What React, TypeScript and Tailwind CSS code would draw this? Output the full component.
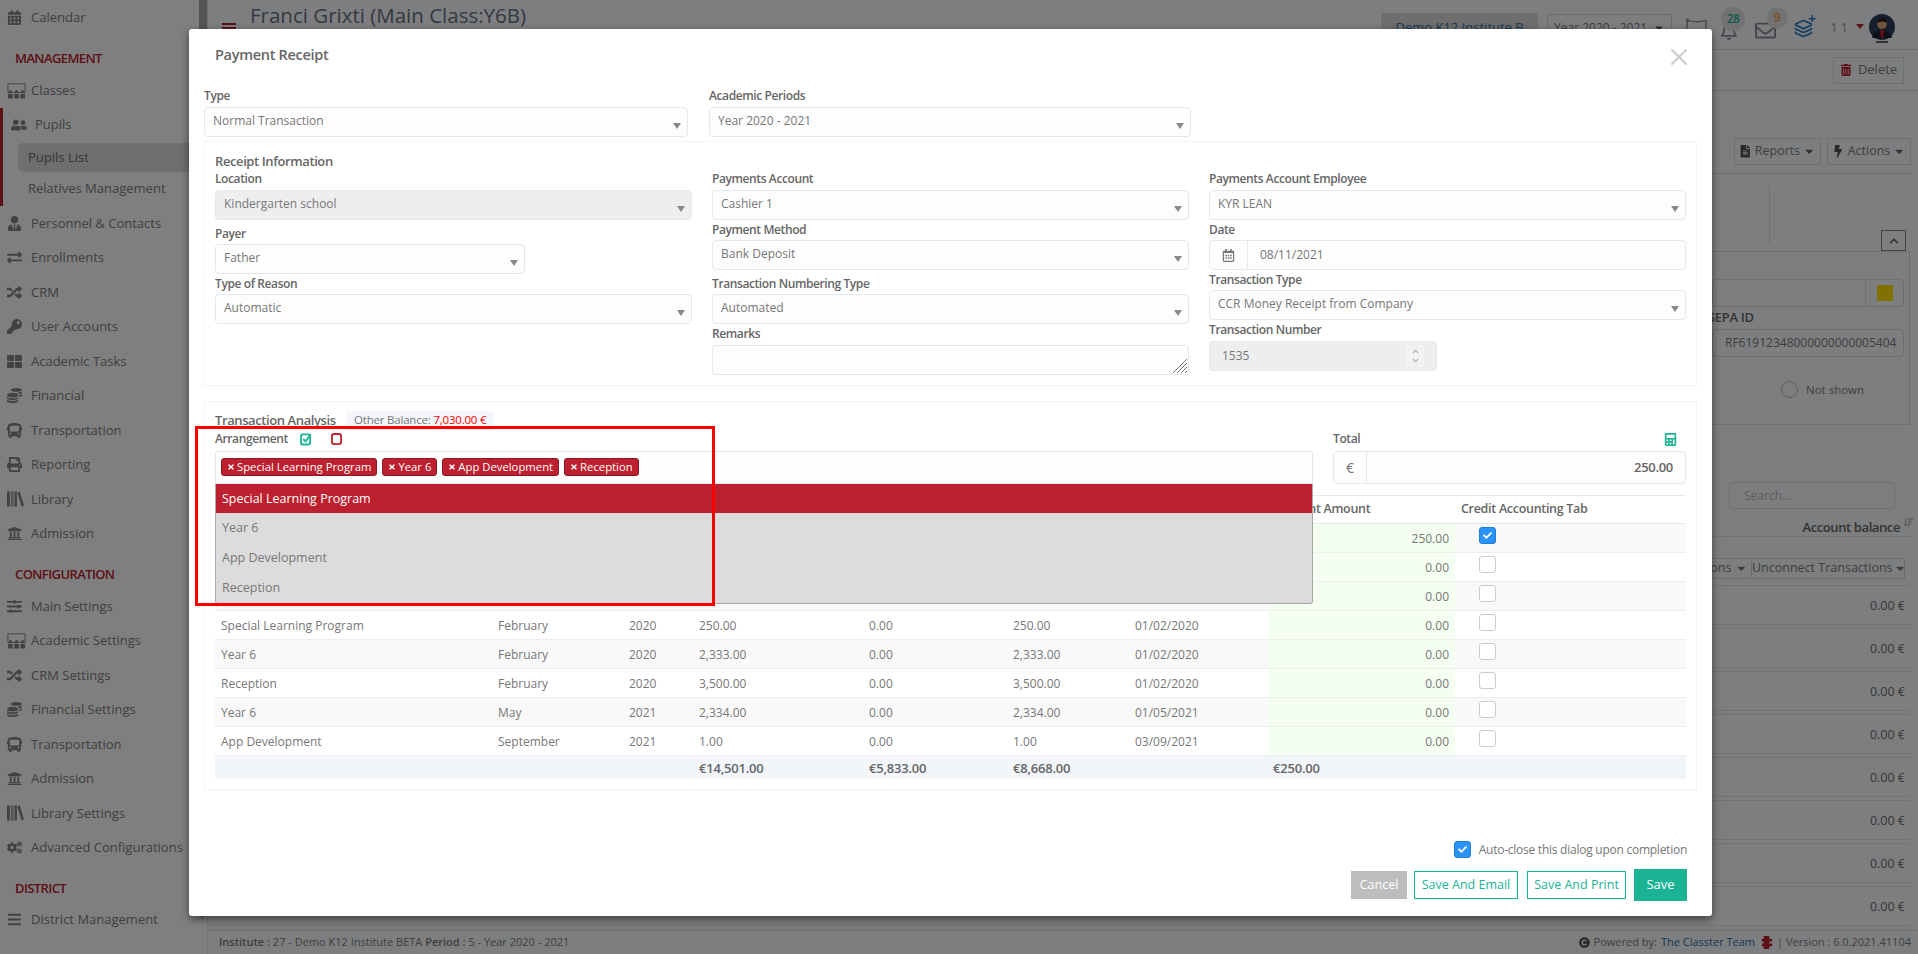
import React from "react";
import {
  FaCalendarAlt, FaUserFriends, FaUserTie, FaExchangeAlt, FaRandom, FaKey, FaThLarge, FaCoins, FaBus, FaPrint,
  FaUniversity, FaSlidersH, FaCogs, FaBars, FaRegBell, FaRegEnvelope, FaTrashAlt, FaBolt, FaFileAlt, FaChevronUp,
  FaCheck, FaRegCalendarAlt, FaCalculator, FaTimes, FaCopyright, FaChevronDown, FaSortAmountDown, FaCaretDown,
} from "react-icons/fa";
import { Layers, X } from "lucide-react";

const ClassesIcon = () => (
  <svg viewBox="0 0 20 16" className="w-[19px] h-[16px]" fill="currentColor">
    <rect x="1" y="0.5" width="18" height="9" fill="none" stroke="currentColor" strokeWidth="1" />
    <circle cx="3.5" cy="8.5" r="1.6" /><circle cx="10" cy="8.5" r="1.6" /><circle cx="16.5" cy="8.5" r="1.6" />
    <rect x="1" y="11" width="5" height="5" rx="1" /><rect x="7.5" y="11" width="5" height="5" rx="1" /><rect x="14" y="11" width="5" height="5" rx="1" />
  </svg>
);
const LibraryIcon = () => (
  <svg viewBox="0 0 18 16" className="w-[17px] h-[16px]" fill="currentColor">
    <rect x="0" y="0" width="3" height="16" /><rect x="4" y="0" width="3" height="16" opacity="0.7" /><rect x="8" y="0" width="2.5" height="16" />
    <polygon points="11,1 13.5,0 18,15 15.5,16" />
  </svg>
);
const Caret = () => (
  <svg viewBox="0 0 8 6" className="w-[8px] h-[6px] absolute right-[6px] top-[15px]"><polygon points="0,0 8,0 4,6" fill="#888888" /></svg>
);

function SideItem({ icon, label }: { icon: React.ReactNode; label: string }) {
  return (
    <div className="flex items-center h-[34.5px] pl-[7px] text-[13px] text-[#808080]">
      <span className="w-[24px] flex items-center justify-start text-[15px] text-[#858585]">{icon}</span>
      <span className="whitespace-nowrap">{label}</span>
    </div>
  );
}
const Heading = ({ children, cls }: { children: React.ReactNode; cls: string }) => (
  <div className={"h-[18px] leading-[18px] pl-[15px] text-[13px] font-semibold tracking-[-0.6px] text-[#bd202e] " + cls}>{children}</div>
);

function Sidebar() {
  return (
    <aside className="relative w-[208px] shrink-0 h-full bg-white border-r border-[#e6e6e6]">
      <div className="absolute right-0 top-0 w-[8px] h-[32px] bg-[#aaaaaa] rounded-b-[4px]" />
      <SideItem icon={<FaCalendarAlt />} label="Calendar" />
      <Heading cls="mt-[14px]">MANAGEMENT</Heading>
      <div className="mt-[7px]" />
      <SideItem icon={<ClassesIcon />} label="Classes" />
      <div className="border-l-[3px] border-[#bd202e] h-[98px]">
        <div className="flex items-center h-[34px] pl-[8px] text-[13px] text-[#808080]">
          <span className="w-[24px] text-[16px] text-[#858585]"><FaUserFriends /></span>Pupils
        </div>
        <div className="mt-[1px] ml-[15px] h-[29px] flex items-center pl-[10px] rounded-l-[5px] bg-[#dedede] text-[13px] text-[#6a6a6a]">Pupils List</div>
        <div className="mt-[3px] ml-[15px] h-[28px] flex items-center pl-[10px] text-[13px] text-[#808080]">Relatives Management</div>
      </div>
      <SideItem icon={<FaUserTie />} label="Personnel & Contacts" />
      <SideItem icon={<FaExchangeAlt />} label="Enrollments" />
      <SideItem icon={<FaRandom />} label="CRM" />
      <SideItem icon={<FaKey />} label="User Accounts" />
      <SideItem icon={<FaThLarge />} label="Academic Tasks" />
      <SideItem icon={<FaCoins />} label="Financial" />
      <SideItem icon={<FaBus />} label="Transportation" />
      <SideItem icon={<FaPrint />} label="Reporting" />
      <SideItem icon={<LibraryIcon />} label="Library" />
      <SideItem icon={<FaUniversity />} label="Admission" />
      <Heading cls="mt-[14px]">CONFIGURATION</Heading>
      <div className="mt-[6px]" />
      <SideItem icon={<FaSlidersH />} label="Main Settings" />
      <SideItem icon={<ClassesIcon />} label="Academic Settings" />
      <SideItem icon={<FaRandom />} label="CRM Settings" />
      <SideItem icon={<FaCoins />} label="Financial Settings" />
      <SideItem icon={<FaBus />} label="Transportation" />
      <SideItem icon={<FaUniversity />} label="Admission" />
      <SideItem icon={<LibraryIcon />} label="Library Settings" />
      <SideItem icon={<FaCogs />} label="Advanced Configurations" />
      <Heading cls="mt-[14px]">DISTRICT</Heading>
      <div className="mt-[5px]" />
      <SideItem icon={<FaBars />} label="District Management" />
      <span className="absolute right-[3px] bottom-[30px] text-[11px] text-[#888888]">‹</span>
    </aside>
  );
}

const Avatar = () => (
  <svg viewBox="0 0 28 30" className="w-[28px] h-[30px] ml-[4px]">
    <circle cx="14" cy="13" r="13" fill="#2c3a5a" />
    <path d="M4 24 Q5 17 14 16 Q23 17 24 24 Z" fill="#1c2333" />
    <polygon points="12,16 16,16 15,24 13,24" fill="#d01f2a" />
    <circle cx="14" cy="10" r="5" fill="#e0a97f" />
    <path d="M9 9 Q10 4 14 4 Q18 4 19 9 Q14 6 9 9 Z" fill="#2a1a12" />
    <rect x="8" y="27" width="12" height="2" fill="#666666" />
  </svg>
);

function Main() {
  return (
    <main className="flex-1 min-w-0 h-full flex flex-col bg-[#fafcff] text-[13px] text-[#7d7d7d]">
      {/* header */}
      <div className="h-[50px] shrink-0 border-b border-[#d8d8d8] flex items-start pr-[22px]">
        <div className="mt-[23px] ml-[14px] w-[14px] flex flex-col gap-[2px]">
          <span className="h-[2px] bg-[#bd202e]" /><span className="h-[2px] bg-[#bd202e]" /><span className="h-[2px] bg-[#bd202e]" />
        </div>
        <div className="ml-[14px] text-[20.5px] leading-[31px] text-[#6b7380] whitespace-nowrap">Franci Grixti (Main Class:Y6B)</div>
        <div className="ml-auto flex items-start">
          <div className="mt-[13px] w-[157px] h-[29px] bg-[#dcdcdc] flex items-center justify-center text-[13px] text-[#2f6ea5]">Demo K12 Institute B</div>
          <div className="mt-[14px] ml-[9px] w-[125px] h-[28px] border border-[#d8d8d8] flex items-center justify-center gap-[6px] text-[12px] whitespace-nowrap">Year 2020 - 2021<FaCaretDown className="text-[#555555]" /></div>
          <svg viewBox="0 0 22 20" className="mt-[18px] ml-[14px] w-[21px] h-[20px]" fill="none" stroke="#8a8f96" strokeWidth="1.4"><path d="M1 2 L1 18 L21 18 L21 2 Q11 5 1 2 Z" /><circle cx="1.5" cy="2" r="1.2" /></svg>
          <div className="relative mt-[20px] ml-[13px] w-[25px] h-[22px]">
            <FaRegBell className="absolute left-0 top-[2px] text-[18px] text-[#8a8f96]" />
            <span className="absolute left-[1px] -top-[13px] w-[24px] h-[24px] rounded-full bg-[#e4e4e4] flex items-center justify-center text-[12px] font-semibold tracking-[-0.5px] text-[#1ab394]">28</span>
          </div>
          <div className="relative mt-[20px] ml-[10px] w-[26px] h-[22px]">
            <FaRegEnvelope className="absolute left-0 top-0 text-[21px] text-[#8a8f96]" />
            <span className="absolute left-[12px] -top-[13px] w-[20px] h-[22px] rounded-full bg-[#e4e4e4] flex items-center justify-center text-[12px] font-semibold text-[#f0a14a]">9</span>
          </div>
          <div className="relative mt-[18px] ml-[13px] w-[20px] h-[20px] text-[#2b7fc4]">
            <Layers className="w-[19px] h-[19px] mt-[1px]" strokeWidth={2.2} />
            <span className="absolute right-[-2px] -top-[6px] text-[14px] font-bold leading-[14px]">+</span>
          </div>
          <span className="mt-[18px] ml-[16px] text-[13px] tracking-[3px] text-[#9a9a9a]">11</span>
          <span className="mt-[24px] ml-[5px] w-0 h-0 border-x-[4px] border-t-[5px] border-x-transparent border-t-[#bd202e]" />
          <div className="mt-[14px]"><Avatar /></div>
        </div>
      </div>
      {/* delete bar */}
      <div className="h-[41px] shrink-0 border-b border-[#d8d8d8] flex items-center justify-end pr-[14px]">
        <div className="w-[71px] h-[27px] border border-[#e3e3e3] flex items-center justify-center gap-[6px] text-[13px]"><FaTrashAlt className="text-[#bd202e] text-[12px]" />Delete</div>
      </div>
      {/* actions */}
      <div className="mt-[47px] h-[27px] shrink-0 flex justify-end gap-[6px] pr-[7px]">
        <div className="w-[87px] border border-[#dddddd] flex items-center justify-center gap-[3px] text-[12.5px]"><FaFileAlt className="text-[#555555]" />Reports<FaCaretDown className="text-[#666666]" /></div>
        <div className="w-[84px] border border-[#dddddd] flex items-center justify-center gap-[3px] text-[12.5px]"><FaBolt className="text-[#555555]" />Actions<FaCaretDown className="text-[#666666]" /></div>
      </div>
      <div className="mt-[8px] mr-[7px] shrink-0 border-b border-[#d8d8d8]" />
      <div className="h-[77px] shrink-0 flex justify-end pr-[12px]">
        <div className="mt-[12px] h-[57px] w-px bg-[#dddddd]" />
        <div className="mt-[56px] ml-[111px] w-[25px] h-[21px] border border-[#888888] flex items-center justify-center text-[#666666] text-[10px]"><FaChevronUp /></div>
      </div>
      {/* panel */}
      <div className="h-[174px] shrink-0 mr-[8px] border border-[#dddddd] flex flex-col items-end pr-[5px]">
        <div className="mt-[27px] w-[192px] h-[28px] border border-[#dddddd] rounded-[4px] flex justify-end">
          <div className="w-[38px] h-full border-l border-[#dddddd] flex items-center justify-center"><span className="w-[16px] h-[16px] bg-[#ffe400]" /></div>
        </div>
        <div className="mt-[1px] w-[192px] h-[18px] leading-[18px] text-[13px] font-semibold tracking-[-0.3px] text-[#666666] -translate-x-[4px]">SEPA ID</div>
        <div className="mt-[3px] w-[192px] h-[28px] border border-[#dddddd] rounded-[4px] flex items-center pl-[12px] text-[12px] overflow-hidden whitespace-nowrap">RF61912348000000000005404</div>
        <div className="mt-[24px] w-[192px] h-[17px] flex items-center pl-[69px]">
          <span className="w-[17px] h-[17px] rounded-full border border-[#bbbbbb]" />
          <span className="ml-[8px] whitespace-nowrap text-[11.5px]">Not shown</span>
        </div>
      </div>
      {/* search + balance */}
      <div className="mt-[57px] mr-[23px] self-end w-[166px] h-[27px] border border-[#e0e0e0] rounded-[3px] shrink-0 flex items-center pl-[14px] text-[12px] text-[#bbbbbb]">Search...</div>
      <div className="mt-[9px] mr-[5px] h-[19px] shrink-0 border-b border-[#e6e6e6] flex justify-end items-start">
        <span className="text-[13px] font-semibold tracking-[-0.4px] text-[#666666] leading-[18px]">Account balance</span>
        <FaSortAmountDown className="ml-[4px] text-[9px] text-[#aaaaaa]" />
      </div>
      <div className="mt-[21px] pr-[13px] h-[21px] shrink-0 flex justify-end">
        <div className="w-[60px] border border-[#dddddd] flex items-center justify-end pr-[4px] gap-[3px] text-[12.5px]">ions<FaCaretDown /></div>
        <div className="w-[153px] border border-[#dddddd] border-l-0 flex items-center justify-center gap-[3px] text-[12.5px] whitespace-nowrap">Unconnect Transactions<FaCaretDown /></div>
      </div>
      <div className="mt-[6px] mr-[7px] shrink-0 border-b border-[#e6e6e6]" />
      <div className="mr-[7px] shrink-0">
        {[0, 1, 2, 3, 4, 5, 6, 7].map((i) => (
          <div key={i} className="h-[43px] border-b border-[#e6e6e6]">
            <div className="h-[39px] border-b border-[#e6e6e6] flex items-center justify-end pr-[6px] pt-[2px] text-[12.5px] text-[#707070]">0.00 €</div>
          </div>
        ))}
      </div>
      <div className="h-[25px] flex-1 border-t border-[#e6e6e6] flex items-center justify-between pl-[11px] pr-[7px] text-[11px] text-[#7d7d7d]">
        <span><b className="font-semibold">Institute :</b> 27 - Demo K12 Institute BETA <b className="font-semibold">Period :</b> 5 - Year 2020 - 2021</span>
        <span className="flex items-center gap-[4px]">
          <FaCopyright className="text-[#555555] text-[11px]" />Powered by: <span className="text-[#2f6ea5]">The Classter Team</span>
          <svg viewBox="0 0 14 16" className="w-[13px] h-[15px] ml-[1px]"><path d="M4 1h6v3h3v3h-3v2h3v3h-3v3H4v-3H2V9h2V7H2V4h2z" fill="#bd202e" /></svg>
          <span>| Version : 6.0.2021.41104</span>
        </span>
      </div>
    </main>
  );
}

/* ---------- modal ---------- */
const Label = ({ children, cls = "" }: { children: React.ReactNode; cls?: string }) => (
  <div className={"h-[18px] leading-[18px] text-[12px] font-semibold tracking-[-0.4px] text-[#666666] whitespace-nowrap " + cls}>{children}</div>
);
function Select({ value, cls = "", disabled }: { value: string; cls?: string; disabled?: boolean }) {
  return (
    <div className={"relative h-[30px] border border-[#e3e8ef] rounded-[4px] flex items-center pl-[8px] pb-[3px] text-[12px] text-[#777777] whitespace-nowrap " + (disabled ? "bg-[#eeeeee] " : "bg-[#fdfdfd] ") + cls}>
      {value}<Caret />
    </div>
  );
}
function Check({ on }: { on?: boolean }) {
  return on ? (
    <span className="w-[17px] h-[17px] rounded-[3px] bg-[#2a93f5] border border-[#1f7fd8] flex items-center justify-center text-white text-[9px]"><FaCheck /></span>
  ) : (
    <span className="w-[17px] h-[17px] rounded-[3px] bg-white border border-[#cccccc] block" />
  );
}
const cols = "grid grid-cols-[277px_131px_70px_170px_144px_122px_140px_186px_231px]";
const rows = [
  ["", "", "", "", "", "", "", "250.00", true],
  ["", "", "", "", "", "", "", "0.00", false],
  ["", "", "", "", "", "", "", "0.00", false],
  ["Special Learning Program", "February", "2020", "250.00", "0.00", "250.00", "01/02/2020", "0.00", false],
  ["Year 6", "February", "2020", "2,333.00", "0.00", "2,333.00", "01/02/2020", "0.00", false],
  ["Reception", "February", "2020", "3,500.00", "0.00", "3,500.00", "01/02/2020", "0.00", false],
  ["Year 6", "May", "2021", "2,334.00", "0.00", "2,334.00", "01/05/2021", "0.00", false],
  ["App Development", "September", "2021", "1.00", "0.00", "1.00", "03/09/2021", "0.00", false],
] as const;

function Tag({ children }: { children: string }) {
  return (
    <span className="h-[18px] rounded-[3px] bg-[#bd202e] border border-[#8e1822] flex items-center px-[5px] text-[11.3px] text-white whitespace-nowrap">
      <FaTimes className="text-[8px] mr-[2px] shrink-0" />{children}
    </span>
  );
}

function Modal() {
  return (
    <div className="absolute left-[189px] top-[29px] w-[1523px] h-[887px] bg-white rounded-[3px] shadow-[0_3px_9px_rgba(0,0,0,0.5)] text-[#777777]">
      <div className="relative h-[58px] pl-[26px] pt-[17px] text-[14.5px] leading-[18px] font-semibold tracking-[-0.3px] text-[#666666]">
        Payment Receipt
        <X className="absolute right-[19px] top-[14px] w-[28px] h-[28px] text-[#cccccc]" strokeWidth={1.7} />
      </div>
      {/* top row */}
      <div className="flex pl-[15px] gap-[21px]">
        <div className="w-[484px]"><Label>Type</Label><Select cls="mt-[2px]" value="Normal Transaction" /></div>
        <div className="w-[482px]"><Label>Academic Periods</Label><Select cls="mt-[2px]" value="Year 2020 - 2021" /></div>
      </div>
      {/* Receipt panel */}
      <div className="ml-[15px] mt-[4px] w-[1493px] h-[245px] border border-[#f2f4f6] px-[10px] pt-[10px]">
        <Label cls="text-[13px]">Receipt Information</Label>
        <div className="grid grid-cols-[477px_477px_477px] gap-x-[20px]">
          <div>
            <Label>Location</Label>
            <Select cls="mt-[2px]" disabled value="Kindergarten school" />
            <Label cls="mt-[5px]">Payer</Label>
            <Select cls="mt-[1px] w-[310px]" value="Father" />
            <Label cls="mt-[1px]">Type of Reason</Label>
            <Select cls="mt-[1px]" value="Automatic" />
          </div>
          <div>
            <Label>Payments Account</Label>
            <Select cls="mt-[2px]" value="Cashier 1" />
            <Label cls="mt-[1px]">Payment Method</Label>
            <Select cls="mt-[1px]" value="Bank Deposit" />
            <Label cls="mt-[5px]">Transaction Numbering Type</Label>
            <Select cls="mt-[1px]" value="Automated" />
            <Label cls="mt-[1px]">Remarks</Label>
            <div className="relative mt-[2px]">
              <textarea readOnly className="block w-full h-[30px] resize-none bg-[#fdfdfd] border border-[#e3e8ef] rounded-[4px] outline-none" />
              <svg viewBox="0 0 14 14" className="absolute right-[2px] bottom-[2px] w-[14px] h-[14px]" stroke="#777777" strokeWidth="1"><path d="M0 14 L14 0 M4 14 L14 4 M8 14 L14 8 M12 14 L14 12" /></svg>
            </div>
          </div>
          <div>
            <Label>Payments Account Employee</Label>
            <Select cls="mt-[2px]" value="KYR LEAN" />
            <Label cls="mt-[1px]">Date</Label>
            <div className="mt-[1px] h-[30px] border border-[#e3e8ef] rounded-[4px] flex items-center bg-[#fdfdfd] text-[12px]">
              <span className="w-[38px] h-full border-r border-[#e3e8ef] flex items-center justify-center text-[13px] text-[#777777]"><FaRegCalendarAlt /></span>
              <span className="ml-[12px]">08/11/2021</span>
            </div>
            <Label cls="mt-[1px]">Transaction Type</Label>
            <Select cls="mt-[1px]" value="CCR Money Receipt from Company" />
            <Label cls="mt-[1px]">Transaction Number</Label>
            <div className="mt-[2px] w-[228px] h-[30px] bg-[#eeeeee] border border-[#e3e8ef] rounded-[4px] flex items-center justify-between pl-[12px] pr-[12px] text-[12px]">
              1535
              <span className="w-[18px] h-[22px] bg-[#f2f2f2] flex flex-col items-center justify-center gap-[2px] text-[7px] text-[#aaaaaa]"><FaChevronUp /><FaChevronDown /></span>
            </div>
          </div>
        </div>
      </div>
      {/* Analysis panel */}
      <div className="ml-[15px] mt-[15px] w-[1493px] h-[389px] border border-[#f2f4f6] px-[10px] pt-[8px]">
        <div className="flex items-center h-[20px]">
          <Label cls="text-[13px] tracking-[-0.3px]">Transaction Analysis</Label>
          <span className="ml-[11px] h-[19px] w-[147px] rounded-[2px] bg-[#f3f6fb] flex items-center justify-center text-[11.5px] tracking-[-0.2px] text-[#777777] whitespace-nowrap">Other Balance:&nbsp;<span className="text-[#ff0000]">7,030.00 €</span></span>
        </div>
        <div className="flex gap-[20px]">
          <div className="w-[1098px]">
            <div className="flex items-center h-[18px]">
              <Label>Arrangement</Label>
              <svg viewBox="0 0 13 14" className="ml-[12px] w-[12px] h-[14px]" fill="none" stroke="#1ab394" strokeWidth="2"><rect x="1" y="2" width="10" height="11" rx="2" /><path d="M3.5 7 L6 9.5 L11.5 2" /></svg>
              <svg viewBox="0 0 12 14" className="ml-[19px] w-[11px] h-[14px]" fill="none" stroke="#bd202e" strokeWidth="2"><rect x="1" y="1.5" width="10" height="11" rx="2.5" /></svg>
            </div>
            <div className="relative mt-[3px] h-[33px] border border-[#e3e8ef] bg-[#fdfdfd] rounded-t-[3px] flex items-center gap-[5px] pl-[5px] pb-[1px]">
              <Tag>Special Learning Program</Tag><Tag>Year 6</Tag><Tag>App Development</Tag><Tag>Reception</Tag>
              <div className="absolute z-10 -left-px -right-px top-[32px] h-[120px] bg-[#dcdcdc] border-x border-b border-[#a8a8a8] rounded-b-[3px] text-[12.5px] text-[#777777]">
                <div className="h-[29px] pt-[1px] bg-[#bd202e] text-white flex items-center pl-[6px]">Special Learning Program</div>
                <div className="h-[30px] pt-[1px] flex items-center pl-[6px]">Year 6</div>
                <div className="h-[30px] pt-[1px] flex items-center pl-[6px]">App Development</div>
                <div className="h-[29px] pt-[1px] flex items-center pl-[6px]">Reception</div>
              </div>
            </div>
          </div>
          <div className="w-[353px]">
            <div className="flex items-center justify-between h-[18px] pr-[9px]">
              <Label>Total</Label><FaCalculator className="text-[13px] text-[#1ab394]" />
            </div>
            <div className="mt-[3px] h-[33px] border border-[#e3e8ef] bg-[#fdfdfd] rounded-[4px] flex items-center text-[#777777]">
              <span className="w-[33px] h-full border-r border-[#e3e8ef] flex items-center justify-center text-[14px]">€</span>
              <span className="flex-1 text-right pr-[12px] text-[13px] font-semibold tracking-[-0.3px] text-[#666666]">250.00</span>
            </div>
          </div>
        </div>
        {/* table */}
        <div className="mt-[11px] text-[12px] text-[#777777] w-[1471px]">
          <div className={cols + " h-[29px] border-y border-[#e6e9ee] items-center text-[12.5px] font-semibold tracking-[-0.3px] text-[#666666]"}>
            <span /><span /><span /><span /><span /><span /><span />
            <span className="whitespace-nowrap">Payment Amount</span>
            <span className="pl-[6px] whitespace-nowrap">Credit Accounting Tab</span>
          </div>
          {rows.map((r, i) => (
            <div key={i} className={cols + " h-[29px] border-b border-[#eeeeee] items-center " + (i % 2 === 0 ? "bg-[#f9f9f9]" : "bg-white")}>
              {r.slice(0, 7).map((c, j) => (
                <span key={j} className="pl-[6px] pt-[2px] whitespace-nowrap">{c as string}</span>
              ))}
              <span className="h-full bg-[#f4fff2] flex items-center justify-end pr-[6px] pt-[1px]">{r[7]}</span>
              <span className="pl-[24px] flex items-start h-full pt-[3px]"><Check on={r[8] as boolean} /></span>
            </div>
          ))}
          <div className={cols + " h-[23px] bg-[#f2f5fa] items-center pt-[2px] text-[13px] font-semibold tracking-[-0.2px] text-[#666666]"}>
            <span /><span /><span />
            <span className="pl-[6px]">€14,501.00</span><span className="pl-[6px]">€5,833.00</span><span className="pl-[6px]">€8,668.00</span><span />
            <span className="pl-[4px]">€250.00</span><span />
          </div>
        </div>
      </div>
      {/* footer */}
      <div className="mt-[51px] pr-[25px] flex justify-end items-center h-[17px]">
        <Check on />
        <span className="ml-[8px] text-[12px] tracking-[-0.25px] text-[#777777] whitespace-nowrap">Auto-close this dialog upon completion</span>
      </div>
      <div className="mt-[11px] pr-[25px] flex justify-end items-center text-[12.5px] h-[32px]">
        <span className="w-[56px] h-[28px] bg-[#bdbdbd] text-white flex items-center justify-center">Cancel</span>
        <span className="ml-[7px] w-[104px] h-[28px] border border-[#1ab394] text-[#1ab394] flex items-center justify-center">Save And Email</span>
        <span className="ml-[9px] w-[99px] h-[28px] border border-[#1ab394] text-[#1ab394] flex items-center justify-center">Save And Print</span>
        <span className="ml-[8px] w-[53px] h-[32px] bg-[#1ab394] text-white flex items-center justify-center text-[13px]">Save</span>
      </div>
      {/* annotation */}
      <div className="absolute z-20 left-[6px] top-[397px] w-[520px] h-[180px] border-[3px] border-[#ff0000] pointer-events-none" />
    </div>
  );
}

export default function App() {
  return (
    <div className="relative w-[1918px] h-[954px] overflow-hidden flex font-['Open_Sans',sans-serif] bg-white">
      <Sidebar />
      <Main />
      <div className="absolute inset-0 bg-black/50" />
      <Modal />
    </div>
  );
}
